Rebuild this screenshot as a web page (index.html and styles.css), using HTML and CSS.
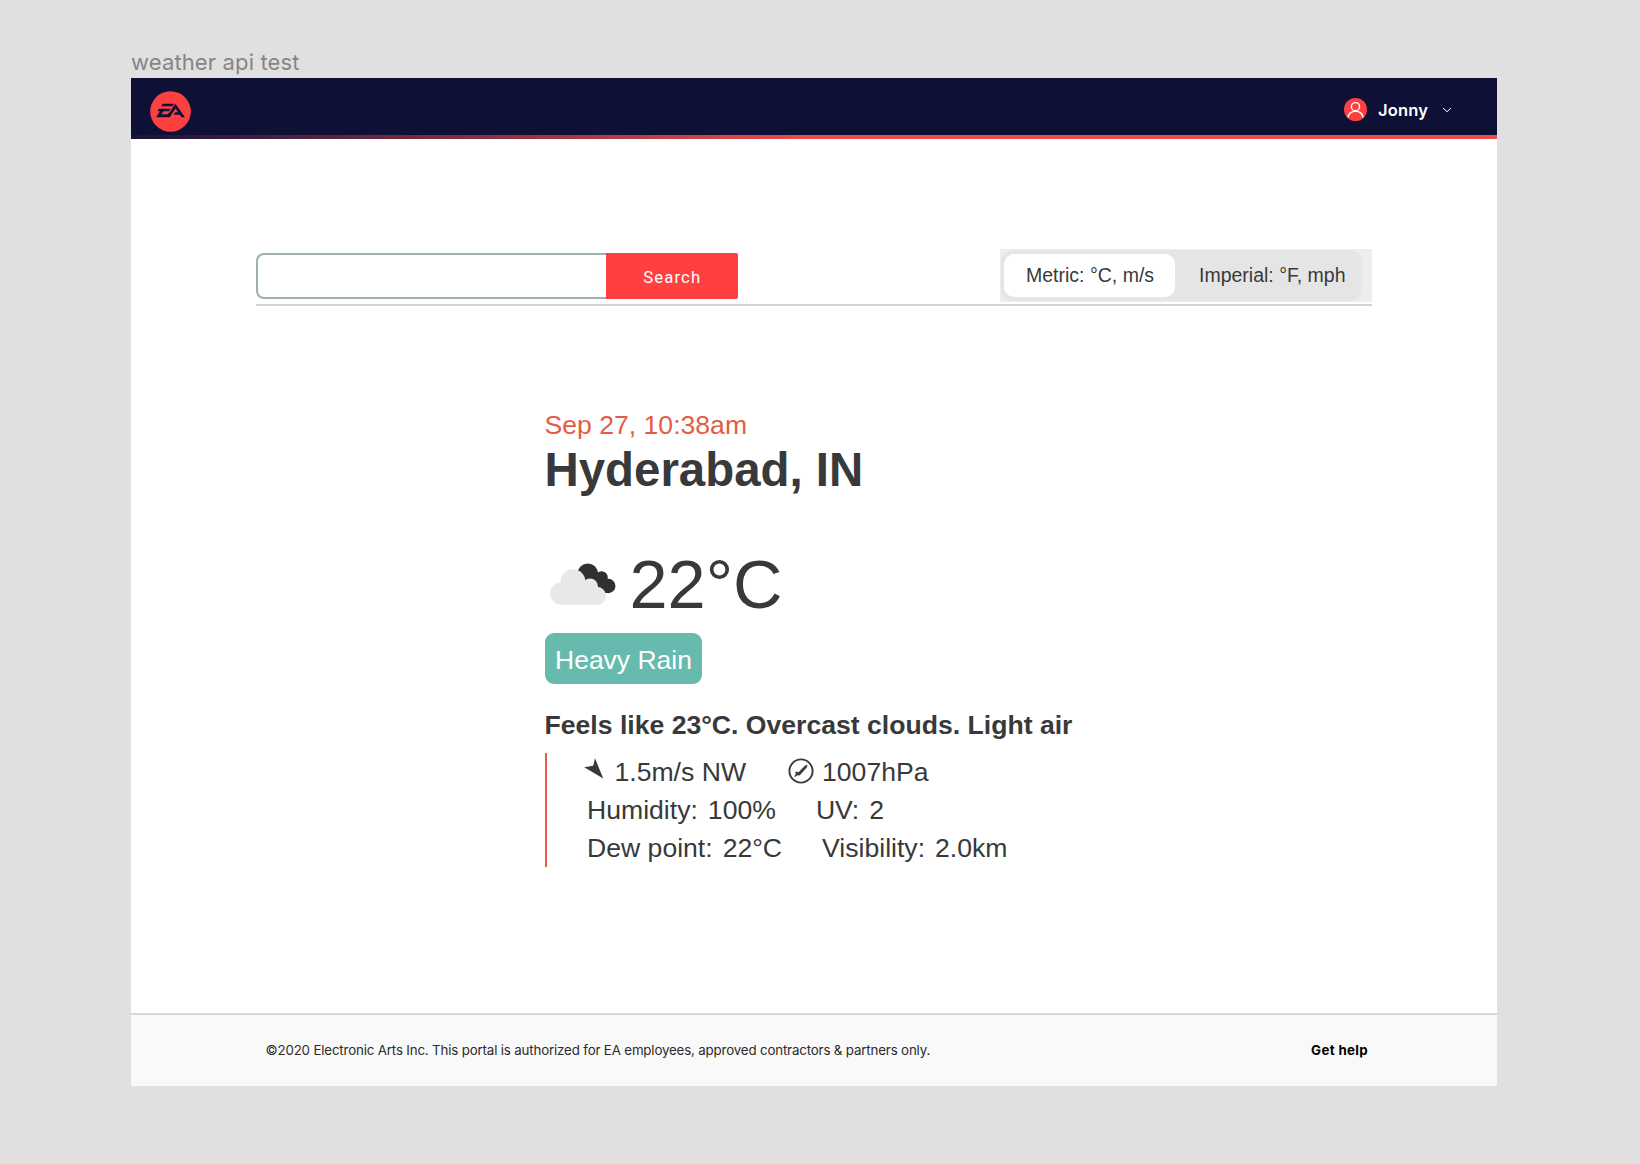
FILE: index.html
```html
<!DOCTYPE html>
<html lang="en">
<head>
<meta charset="utf-8">
<title>weather api test</title>
<link rel="stylesheet" href="styles.css">
</head>
<body>
<div class="frame-label">weather api test</div>
<div class="frame">
  <header class="topbar">
    <svg class="logo" viewBox="0 0 41 41" aria-label="EA">
      <circle cx="20.5" cy="20.5" r="20.3" fill="#ff4040"/>
      <path d="M12.700 12.700H24.200L22.700 15.200H11.200ZM9 17.700H20.300L18.800 20.200H13.200L11.600 23.200H18L25.500 12.700L35 26.300H31.400L29.800 23.800H23.500L25.200 21.200H28L25.600 17.400L19.700 26.300H6.200L9.900 20.200H7.500Z" fill="#0e1036"/>
    </svg>
    <div class="user">
      <svg class="avatar" viewBox="0 0 23 23">
        <circle cx="11.5" cy="11.5" r="11.5" fill="#ff4040"/>
        <g fill="none" stroke="#fff" stroke-width="1.4">
          <circle cx="11.5" cy="8.7" r="4.1"/>
          <path d="M3.800 19.300C4.700 15.400 7.900 13.200 11.500 13.200S18.300 15.400 19.200 19.300"/>
        </g>
      </svg>
      <span class="name">Jonny</span>
      <svg class="chevron" viewBox="0 0 10 6"><path d="M1 1L5 4.700L9 1" fill="none" stroke="#fff" stroke-width="1"/></svg>
    </div>
  </header>
  <main class="main">
    <div class="tools">
      <form class="search">
        <input class="search-input" type="text" aria-label="City">
        <button class="search-button" type="button">Search</button>
      </form>
      <div class="units">
        <div class="units-track">
          <span class="unit unit-active">Metric: °C, m/s</span>
          <span class="unit">Imperial: °F, mph</span>
        </div>
      </div>
    </div>
    <section class="weather">
      <div class="date">Sep 27, 10:38am</div>
      <h1 class="city">Hyderabad, IN</h1>
      <div class="current">
        <svg class="clouds" viewBox="0 0 68 44">
          <g fill="#2f3032"><circle cx="38.800" cy="10.800" r="10.300"/><circle cx="52.500" cy="14.500" r="6.300"/><circle cx="59.300" cy="23" r="7.200"/><path d="M38 14L52 10L62 24L58 30H42Z"/></g>
          <g fill="#e8e8e7"><circle cx="24" cy="18.500" r="12.300"/><circle cx="12.500" cy="30.500" r="11.300"/><circle cx="41" cy="23.500" r="8"/><circle cx="48" cy="32.800" r="9"/><path d="M12.500 28L22 20H40L48 26V41.800H12.500Z"/></g>
        </svg>
        <span class="temp">22°C</span>
      </div>
      <div class="badge">Heavy Rain</div>
      <div class="summary">Feels like 23°C. Overcast clouds. Light air</div>
      <ul class="details">
        <li class="row row-icons">
          <span class="item"><svg class="arrow" viewBox="0 0 20 21"><path d="M.2 9.200L9.200 7.800L11 .2L19.200 20.600Z" fill="#38393b"/></svg>1.5m/s NW</span>
          <span class="item"><svg class="gauge" viewBox="0 0 26 26"><circle cx="13" cy="13" r="11.600" fill="none" stroke="#38393b" stroke-width="1.900"/><path d="M19.200 7L18.600 9.500L11.500 17.300L9.900 16.900L6.500 18.800L8 15.600L7.500 13.900L10.800 14.300L16.800 8Z" fill="#38393b" stroke="#38393b" stroke-width=".5"/></svg>1007hPa</span>
        </li>
        <li class="row"><span class="item"><span>Humidity:</span><span>100%</span></span><span class="item"><span>UV:</span><span>2</span></span></li>
        <li class="row"><span class="item"><span>Dew point:</span><span>22°C</span></span><span class="item"><span>Visibility:</span><span>2.0km</span></span></li>
      </ul>
    </section>
  </main>
  <footer class="footer">
    <span class="legal">©2020 Electronic Arts Inc. This portal is authorized for EA employees, approved contractors &amp; partners only.</span>
    <a class="help">Get help</a>
  </footer>
</div>
</body>
</html>
```
FILE: styles.css
```css
* { box-sizing: border-box; }

body {
  margin: 0;
  height: 1164px;
  padding: 47px 143px 0 131px;
  background: #e0e0e0;
  color: #38393b;
  font-family: "Liberation Sans", Arial, sans-serif;
  overflow: hidden;
}

.frame-label {
  height: 31px;
  font: 22px/30px Inter, sans-serif;
  letter-spacing: 0.130px;
  color: #858585;
  white-space: nowrap;
}

.frame {
  display: flex;
  flex-direction: column;
  height: 1008px;
  background: #fff;
}

.topbar {
  display: flex;
  justify-content: space-between;
  align-items: flex-start;
  height: 61px;
  padding: 13px 45px 0 19px;
  background: linear-gradient(90deg, #1b1439 0%, #f04b4b 50%, #f04b4b 100%) 0 100% / 100% 4px no-repeat #0e1036;
}

.logo { width: 41px; height: 41px; }

.user {
  display: flex;
  align-items: center;
  height: 37px;
}

.avatar { width: 23px; height: 23px; }

.name {
  width: 64px;
  margin-left: 11px;
  padding-top: 1px;
  font: 600 16.500px/24px Inter, sans-serif;
  letter-spacing: 0.200px;
  color: #fff;
}

.chevron { width: 10px; height: 6px; }

.main { height: 874px; padding: 110px 125px 0; }

.tools {
  display: flex;
  justify-content: space-between;
  align-items: flex-start;
  height: 57px;
  border-bottom: 2px solid #cfd5d4;
}

.search {
  display: flex;
  width: 482px;
  height: 46px;
  margin-top: 4px;
}

.search-input {
  width: 349.500px;
  border: 2px solid #9eb0af;
  border-right: 0;
  border-radius: 8px 0 0 8px;
  background: #fff;
}

.search-button {
  flex: 1;
  padding: 3px 0 0 1px;
  border: 0;
  border-radius: 0 2px 2px 0;
  background: #ff4040;
  color: #fff;
  font: 16.700px Roboto, sans-serif;
  letter-spacing: 1.100px;
}

.units {
  width: 372px;
  height: 53px;
  padding: 1px 10px 1px 1px;
  background: #ededed;
}

.units-track {
  display: flex;
  height: 51px;
  padding: 4px 3px;
  border-radius: 12px;
  background: #e5e5e5;
}

.unit {
  flex: 1;
  height: 43px;
  padding-left: 24px;
  border-radius: 10px;
  font-size: 19.500px;
  line-height: 42px;
  white-space: nowrap;
}

.unit-active {
  flex: 0 0 171px;
  padding-left: 22px;
  background: #fff;
}

.weather { padding: 104px 0 0 288.500px; }

.date {
  color: #e35d45;
  font-size: 26.600px;
  line-height: 30px;
}

.city {
  margin: 5px 0 0;
  font-size: 47.400px;
  line-height: 50px;
}

.current {
  display: flex;
  height: 70px;
  margin-top: 54.500px;
}

.clouds {
  width: 68px;
  height: 44px;
  margin: 13px 13px 0 4px;
}

.temp { font-size: 68.500px; line-height: 70px; }

.badge {
  width: 157.500px;
  height: 51.500px;
  margin-top: 13px;
  padding: 1px 0 0 10.500px;
  border-radius: 9px;
  background: #66baae;
  color: #fff;
  font-size: 26.500px;
  line-height: 52px;
}

.summary {
  margin-top: 21px;
  font-size: 26.600px;
  font-weight: 700;
  line-height: 40px;
  white-space: nowrap;
}

.details {
  margin: 7.500px 0 0;
  padding: 0 0 0 40.500px;
  border-left: 2px solid #e35d45;
  list-style: none;
  font-size: 26.600px;
  line-height: 38px;
}

.row { display: flex; gap: 40px; height: 38px; }

.item { display: flex; gap: 10px; white-space: nowrap; }

.row-icons { margin-left: -3px; gap: 42px; }

.row-icons .item { gap: 8px; }

.arrow { width: 20px; height: 21px; margin: 5px 2.500px 0 0; }

.gauge { width: 26px; height: 26px; margin-top: 5.500px; }

.footer {
  display: flex;
  justify-content: space-between;
  height: 73px;
  padding: 0 129px 0 134.500px;
  border-top: 2px solid #d8d8d8;
  background: #f9f9f9;
  font: 13.300px/70px Inter, sans-serif;
  color: #2b2b2b;
  white-space: nowrap;
}

.legal { letter-spacing: -0.160px; }

.help {
  color: #000;
  font-weight: 700;
  letter-spacing: 0.350px;
}
```
